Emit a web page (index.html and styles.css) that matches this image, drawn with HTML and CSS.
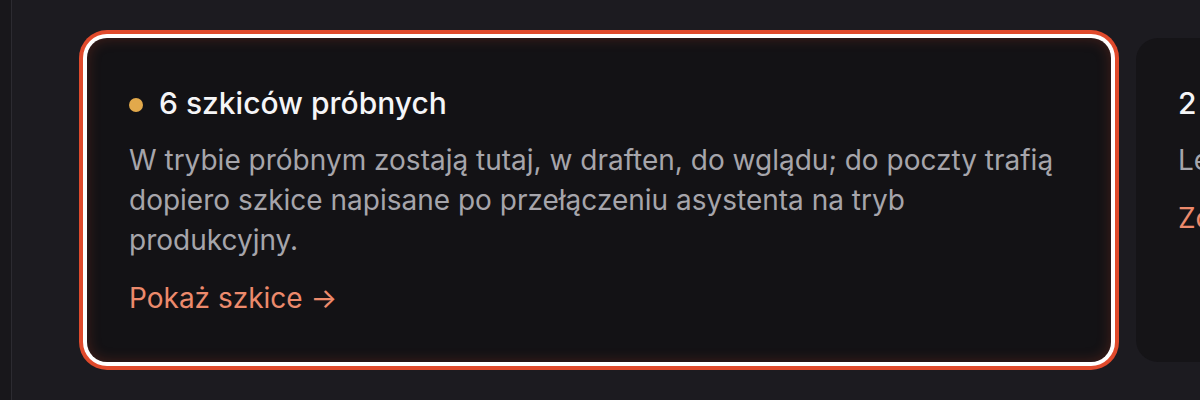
FILE: index.html
```html
<!DOCTYPE html>
<html lang="pl">
<head>
<meta charset="utf-8">
<link rel="stylesheet" href="styles.css">
</head>
<body>
<div class="app">
  <aside class="rail"></aside>
  <main class="main">
    <div class="cards">
      <section class="card card--focus">
        <h3 class="card-title"><span class="dot"></span>6 szkiców próbnych</h3>
        <p class="card-text">W trybie próbnym zostają tutaj, w draften, do wglądu; do poczty trafią dopiero szkice napisane po przełączeniu asystenta na tryb produkcyjny.</p>
        <a class="card-link" href="#">Pokaż szkice →</a>
      </section>
      <section class="card card--peek">
        <h3 class="card-title">2</h3>
        <p class="card-text">Le</p>
        <a class="card-link" href="#">Zo</a>
      </section>
    </div>
  </main>
</div>
</body>
</html>
```
FILE: styles.css
```css
* { box-sizing: border-box; }
html, body {
  margin: 0;
  height: 100%;
  background: #1c1b20;
  font-family: Inter, "Noto Sans", sans-serif;
  overflow: hidden;
}
.app {
  display: flex;
  height: 400px;
}
.rail {
  width: 12px;
  flex: 0 0 12px;
  background: #18171b;
  border-right: 1px solid #2c2b31;
}
.main {
  flex: 1;
  padding: 38px 0 0 75px;
  overflow: hidden;
}
.cards {
  display: flex;
  gap: 25px;
  width: 2100px;
}
.card {
  flex: 0 0 1024px;
  height: 324px;
  background: #151417;
  border-radius: 22px;
  padding: 44px 40px 0 42px;
}
.card--peek {
  flex: 0 0 63px;
  padding-right: 0;
  border-radius: 22px 0 0 22px;
}
.card--focus {
  background: #131215;
  border-radius: 20px;
  box-shadow:
    inset 0 0 14px rgba(200, 70, 40, 0.28),
    0 0 0 4px #ffffff,
    0 0 0 8px #e04a2c;
}
.card-title {
  margin: 0;
  display: flex;
  align-items: center;
  gap: 16px;
  font-size: 30px;
  font-weight: 500;
  line-height: 42px;
  color: #f5f5f7;
  white-space: nowrap;
}
.dot {
  width: 14px;
  height: 14px;
  margin-top: 3px;
  border-radius: 50%;
  background: #e2a94b;
  flex: 0 0 14px;
}
.card-text {
  margin: 16px 0 0;
  font-size: 28px;
  line-height: 40px;
  color: #a6a5ab;
}
.card-link {
  display: inline-block;
  margin-top: 18px;
  font-size: 28px;
  line-height: 40px;
  color: #ec8a6c;
  text-decoration: none;
}
```
